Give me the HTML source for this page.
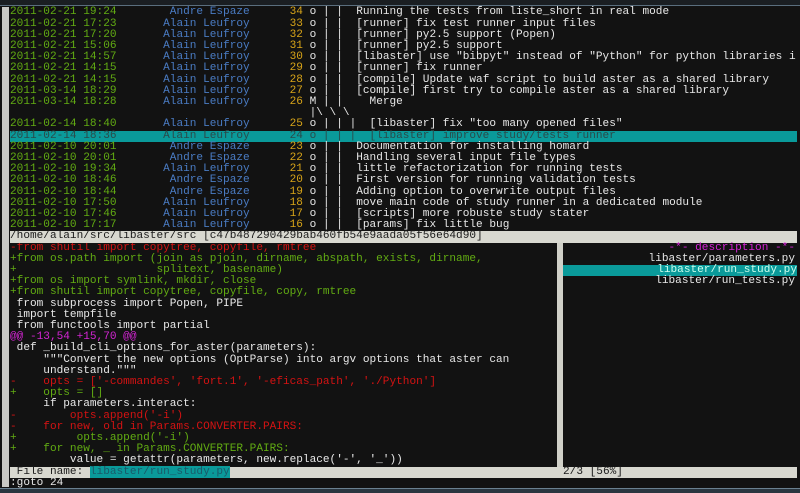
<!DOCTYPE html>
<html><head><meta charset="utf-8"><style>
html,body{margin:0;padding:0;background:#121212;width:800px;height:493px;overflow:hidden;position:relative}
.l{position:absolute;left:10px;white-space:pre;font-family:"Liberation Mono",monospace;font-size:11.1px;line-height:11.2px;height:11.2px;color:#e8e8e8}
.g{color:#62ac12}.b{color:#4a7cc4}.o{color:#d8a418}.r{color:#d41212}.m{color:#d424d4}.w{color:#eaeaea}
.hl{background:#0a9a9a;color:#2a4a4a}
.bar{background:#d8d8d0;color:#1a1a1a}
</style></head><body>
<div style="position:absolute;left:0;top:0;width:800px;height:5px;background:#1a1e22"></div>
<div style="position:absolute;left:0;top:5px;width:800px;height:1px;background:#5a6e7e"></div>
<div style="position:absolute;left:2px;top:7px;width:7px;height:480px;background:#c8c8c4"></div>
<div style="position:absolute;left:0;top:488px;width:800px;height:5px;background:#2a3640"></div>
<div style="position:absolute;left:0;top:488px;width:800px;height:1px;background:#6a8090"></div>

<div class="l" style="top:7.4px"><span class="g">2011-02-21 19:24</span>        <span class="b">Andre Espaze</span>      <span class="o">34</span> o | |  Running the tests from liste_short in real mode</div>
<div class="l" style="top:18.6px"><span class="g">2011-02-21 17:23</span>       <span class="b">Alain Leufroy</span>      <span class="o">33</span> o | |  [runner] fix test runner input files</div>
<div class="l" style="top:29.8px"><span class="g">2011-02-21 17:20</span>       <span class="b">Alain Leufroy</span>      <span class="o">32</span> o | |  [runner] py2.5 support (Popen)</div>
<div class="l" style="top:41px"><span class="g">2011-02-21 15:06</span>       <span class="b">Alain Leufroy</span>      <span class="o">31</span> o | |  [runner] py2.5 support</div>
<div class="l" style="top:52.2px"><span class="g">2011-02-21 14:57</span>       <span class="b">Alain Leufroy</span>      <span class="o">30</span> o | |  [libaster] use "bibpyt" instead of "Python" for python libraries i</div>
<div class="l" style="top:63.4px"><span class="g">2011-02-21 14:15</span>       <span class="b">Alain Leufroy</span>      <span class="o">29</span> o | |  [runner] fix runner</div>
<div class="l" style="top:74.6px"><span class="g">2011-02-21 14:15</span>       <span class="b">Alain Leufroy</span>      <span class="o">28</span> o | |  [compile] Update waf script to build aster as a shared library</div>
<div class="l" style="top:85.8px"><span class="g">2011-03-14 18:29</span>       <span class="b">Alain Leufroy</span>      <span class="o">27</span> o | |  [compile] first try to compile aster as a shared library</div>
<div class="l" style="top:97px"><span class="g">2011-03-14 18:28</span>       <span class="b">Alain Leufroy</span>      <span class="o">26</span> M | |    Merge</div>
<div class="l" style="top:108.2px">                                             |\ \ \</div>
<div class="l" style="top:119.4px"><span class="g">2011-02-14 18:40</span>       <span class="b">Alain Leufroy</span>      <span class="o">25</span> o | | |  [libaster] fix "too many opened files"</div>
<div class="l hl" style="top:130.6px;width:787px">2011-02-14 18:36       Alain Leufroy      24 o | | |  [libaster] improve study/tests runner</div>
<div class="l" style="top:141.8px"><span class="g">2011-02-10 20:01</span>        <span class="b">Andre Espaze</span>      <span class="o">23</span> o | |  Documentation for installing homard</div>
<div class="l" style="top:153px"><span class="g">2011-02-10 20:01</span>        <span class="b">Andre Espaze</span>      <span class="o">22</span> o | |  Handling several input file types</div>
<div class="l" style="top:164.2px"><span class="g">2011-02-10 19:34</span>       <span class="b">Alain Leufroy</span>      <span class="o">21</span> o | |  little refactorization for running tests</div>
<div class="l" style="top:175.4px"><span class="g">2011-02-10 18:46</span>        <span class="b">Andre Espaze</span>      <span class="o">20</span> o | |  First version for running validation tests</div>
<div class="l" style="top:186.6px"><span class="g">2011-02-10 18:44</span>        <span class="b">Andre Espaze</span>      <span class="o">19</span> o | |  Adding option to overwrite output files</div>
<div class="l" style="top:197.8px"><span class="g">2011-02-10 17:50</span>       <span class="b">Alain Leufroy</span>      <span class="o">18</span> o | |  move main code of study runner in a dedicated module</div>
<div class="l" style="top:209px"><span class="g">2011-02-10 17:46</span>       <span class="b">Alain Leufroy</span>      <span class="o">17</span> o | |  [scripts] more robuste study stater</div>
<div class="l" style="top:220.2px"><span class="g">2011-02-10 17:17</span>       <span class="b">Alain Leufroy</span>      <span class="o">16</span> o | |  [params] fix little bug</div>
<div class="l bar" style="top:231.4px;width:787px">/home/alain/src/libaster/src [c47b487290429bab460fb54e9aada05f56e64d90]</div>

<div style="position:absolute;left:557px;top:242.6px;width:6px;height:224px;background:#d0d0c8"></div>
<div style="position:absolute;left:10px;top:242.6px;width:547px;height:224px;overflow:hidden">
<div class="l" style="left:0;top:0"><span class="r">-from shutil import copytree, copyfile, rmtree</span></div>
<div class="l" style="left:0;top:11.2px"><span class="g">+from os.path import (join as pjoin, dirname, abspath, exists, dirname,</span></div>
<div class="l" style="left:0;top:22.4px"><span class="g">+                     splitext, basename)</span></div>
<div class="l" style="left:0;top:33.6px"><span class="g">+from os import symlink, mkdir, close</span></div>
<div class="l" style="left:0;top:44.8px"><span class="g">+from shutil import copytree, copyfile, copy, rmtree</span></div>
<div class="l" style="left:0;top:56px"> from subprocess import Popen, PIPE</div>
<div class="l" style="left:0;top:67.2px"> import tempfile</div>
<div class="l" style="left:0;top:78.4px"> from functools import partial</div>
<div class="l" style="left:0;top:89.6px"><span class="m">@@ -13,54 +15,70 @@</span></div>
<div class="l" style="left:0;top:100.8px"> def _build_cli_options_for_aster(parameters):</div>
<div class="l" style="left:0;top:112px">     """Convert the new options (OptParse) into argv options that aster can</div>
<div class="l" style="left:0;top:123.2px">     understand."""</div>
<div class="l" style="left:0;top:134.4px"><span class="r">-    opts = ['-commandes', 'fort.1', '-eficas_path', './Python']</span></div>
<div class="l" style="left:0;top:145.6px"><span class="g">+    opts = []</span></div>
<div class="l" style="left:0;top:156.8px">     if parameters.interact:</div>
<div class="l" style="left:0;top:168px"><span class="r">-        opts.append('-i')</span></div>
<div class="l" style="left:0;top:179.2px"><span class="r">-    for new, old in Params.CONVERTER.PAIRS:</span></div>
<div class="l" style="left:0;top:190.4px"><span class="g">+         opts.append('-i')</span></div>
<div class="l" style="left:0;top:201.6px"><span class="g">+    for new, _ in Params.CONVERTER.PAIRS:</span></div>
<div class="l" style="left:0;top:212.8px">         value = getattr(parameters, new.replace('-', '_'))</div>
</div>

<div class="l m" style="left:auto;right:5px;top:242.6px">-*- description -*-</div>
<div class="l" style="left:auto;right:5px;top:253.8px">libaster/parameters.py</div>
<div class="l hl" style="left:563px;top:265px;width:234px;text-align:right;color:#cfe">libaster/run_study.py</div>
<div class="l" style="left:auto;right:5px;top:276.2px">libaster/run_tests.py</div>

<div class="l bar" style="top:466.6px;width:787px"> File name: <span class="hl" style="color:#1a5a6a">libaster/run_study.py</span></div>
<div class="l" style="left:563px;top:466.6px;color:#1a1a1a">2/3 [56%]</div>
<div class="l" style="top:477.8px">:goto 24</div>
</body></html>
